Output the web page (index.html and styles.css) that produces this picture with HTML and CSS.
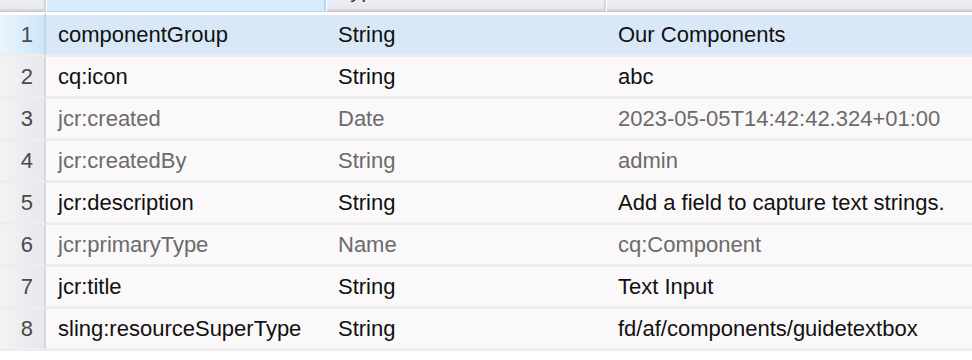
FILE: index.html
```html
<!DOCTYPE html>
<html>
<head>
<meta charset="utf-8">
<link rel="stylesheet" href="styles.css">
</head>
<body>
<table class="grid">
  <thead>
    <tr>
      <th class="num-h"><div class="hcut"></div></th>
      <th class="col-h col-sel"><div class="hcut"><span class="htxt">Name</span></div></th>
      <th class="col-h"><div class="hcut"><span class="htxt">Type</span></div></th>
      <th class="col-h col-last"><div class="hcut"><span class="htxt">Value</span></div></th>
    </tr>
  </thead>
  <tbody>
    <tr class="row sel">
      <td class="num">1</td><td class="cell">componentGroup</td><td class="cell">String</td><td class="cell">Our Components</td>
    </tr>
    <tr class="row">
      <td class="num">2</td><td class="cell">cq:icon</td><td class="cell">String</td><td class="cell">abc</td>
    </tr>
    <tr class="row prot">
      <td class="num">3</td><td class="cell">jcr:created</td><td class="cell">Date</td><td class="cell">2023-05-05T14:42:42.324+01:00</td>
    </tr>
    <tr class="row prot">
      <td class="num">4</td><td class="cell">jcr:createdBy</td><td class="cell">String</td><td class="cell">admin</td>
    </tr>
    <tr class="row">
      <td class="num">5</td><td class="cell">jcr:description</td><td class="cell">String</td><td class="cell">Add a field to capture text strings.</td>
    </tr>
    <tr class="row prot">
      <td class="num">6</td><td class="cell">jcr:primaryType</td><td class="cell">Name</td><td class="cell">cq:Component</td>
    </tr>
    <tr class="row">
      <td class="num">7</td><td class="cell">jcr:title</td><td class="cell">String</td><td class="cell">Text Input</td>
    </tr>
    <tr class="row">
      <td class="num">8</td><td class="cell">sling:resourceSuperType</td><td class="cell">String</td><td class="cell">fd/af/components/guidetextbox</td>
    </tr>
  </tbody>
</table>
</body>
</html>
```

FILE: styles.css
```css
html, body {
  margin: 0;
  padding: 0;
  background: #ffffff;
}

.grid {
  width: 972px;
  border-collapse: separate;
  border-spacing: 0;
  table-layout: fixed;
  font-family: "Liberation Sans", Arial, Helvetica, sans-serif;
  font-size: 22px;
  color: #111111;
}

.grid th, .grid td {
  box-sizing: border-box;
}

.num-h { width: 46px; }
.col-h:nth-child(2) { width: 280px; }
.col-h:nth-child(3) { width: 280px; }

th {
  height: 12px;
  padding: 0;
  font-weight: normal;
  text-align: left;
  color: #3a3a3a;
  border-bottom: 1px solid #cec4c6;
  background: linear-gradient(#eeeff6, #e6e6ee);
  box-shadow: inset 0 -2px 0 #ddd6d8;
  vertical-align: top;
}

.hcut {
  height: 11px;
  overflow: hidden;
  padding-left: 11px;
}

.htxt {
  display: block;
  line-height: 20px;
  margin-top: -20px;
  white-space: nowrap;
}

.num-h {
  border-right: 2px solid #d9d0d2;
}

.col-h {
  border-left: 1px solid #ffffff;
  border-right: 2px solid #ddd2d4;
}

.col-last {
  border-right: none;
}

.col-sel {
  background: #d6ebfb;
  border-right: 2px solid #b3d9f4;
  border-bottom: 1px solid #b3d9f4;
  box-shadow: none;
}

tbody tr:first-child td {
  border-top: 3px solid #ffffff;
}

.row td {
  height: 42px;
  padding: 0;
  border-bottom: 3px solid #efeced;
  background: #faf8f9;
  vertical-align: middle;
  white-space: nowrap;
  overflow: hidden;
}

.row:first-child td {
  height: 45px;
}

.row .num {
  text-align: right;
  padding-right: 11px;
  color: #4a4a4a;
  background: linear-gradient(90deg, #f3f3f5, #e6e8ec);
  border-right: 2px solid #dbd6da;
}

.row .cell {
  padding-left: 12px;
}

.row.sel td {
  background: #d9e8f7;
}

.row.sel .num {
  background: linear-gradient(90deg, #e9f4fd, #cfe6f9);
  border-right: 2px solid #b9dcf5;
}

.row.prot .cell {
  color: #6b6b6b;
}
```
